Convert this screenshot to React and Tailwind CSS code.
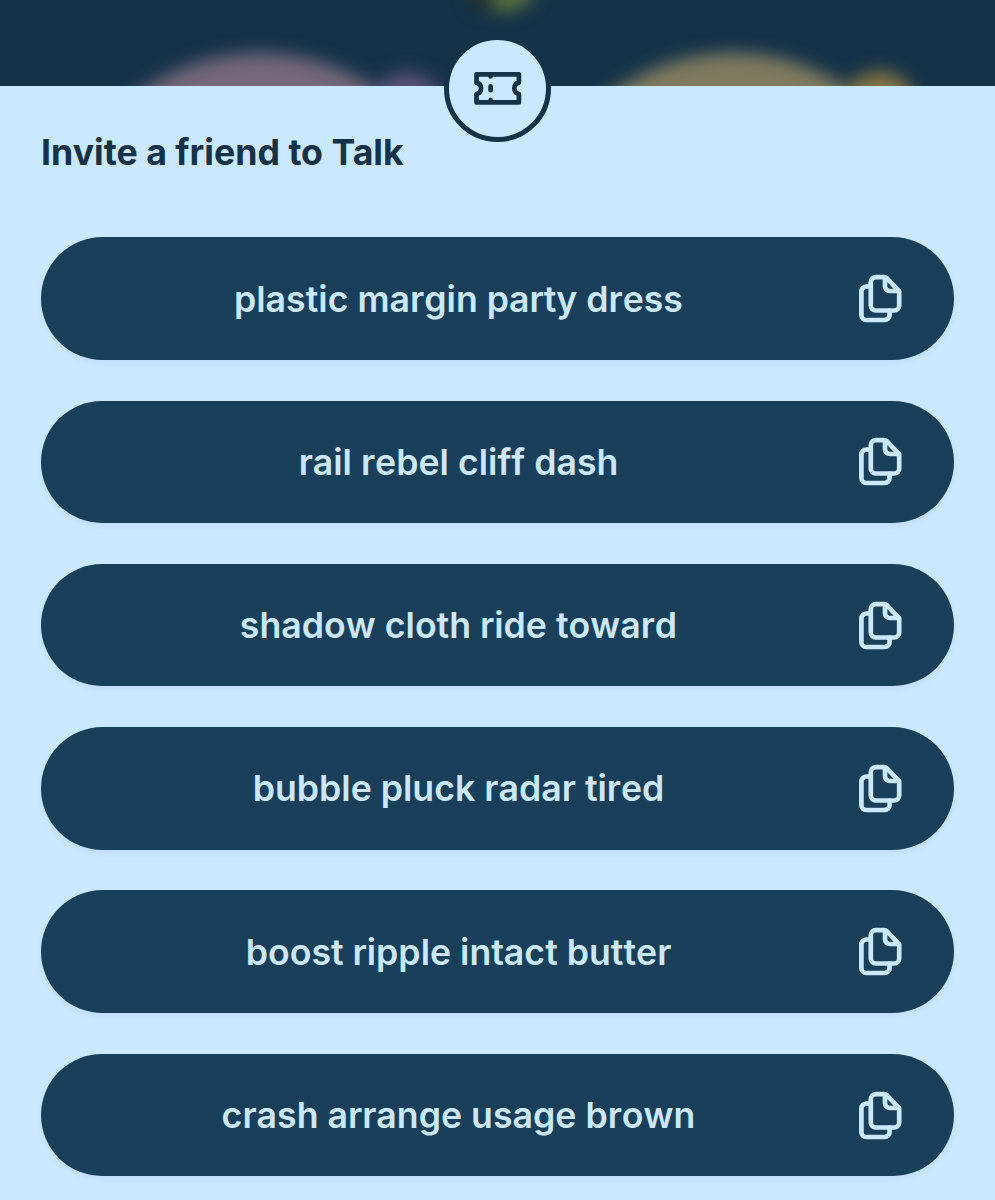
const INVITES = [
  'plastic margin party dress',
  'rail rebel cliff dash',
  'shadow cloth ride toward',
  'bubble pluck radar tired',
  'boost ripple intact butter',
  'crash arrange usage brown',
];

function TicketIcon() {
  return (
    <svg
      className="h-[34px] w-[50px]"
      viewBox="0 0 50 34"
      fill="none"
      stroke="currentColor"
      strokeWidth="4.7"
      strokeLinecap="round"
      strokeLinejoin="round"
    >
      <path d="M3.5 2.3H45.9V10.6A5.9 5.9 0 0 0 45.9 22.1V30.4H3.5V22.1A5.9 5.9 0 0 0 3.5 10.6Z" />
      <path d="M17.6 3.2V4.5M17.6 14.4V18.2M17.6 28.2V29.5" />
    </svg>
  );
}

function CopyIcon() {
  return (
    <svg
      className="h-[51px] w-[51px] shrink-0"
      viewBox="0 0 51 51"
      fill="none"
      stroke="currentColor"
      strokeWidth="4.7"
      strokeLinecap="round"
      strokeLinejoin="round"
    >
      <path d="M29 4.1H20.8A5 5 0 0 0 15.8 9.1V32.5A5 5 0 0 0 20.8 37.5H39.2A5 5 0 0 0 44.2 32.5V18.3L31.8 5.2Q30.7 4.1 29 4.1Z" />
      <path d="M30 4.5V13.2A4.8 4.8 0 0 0 34.8 18H43.7" />
      <path d="M15.8 13.5H11.4A5 5 0 0 0 6.4 18.5V42A5 5 0 0 0 11.4 47H29.6A5 5 0 0 0 34.6 42V37.5" />
    </svg>
  );
}

function Backdrop() {
  return (
    <svg className="block h-[86px] w-full bg-[#153248]" viewBox="0 0 995 86">
      <defs>
        <filter
          id="soft"
          filterUnits="userSpaceOnUse"
          x="-100"
          y="-100"
          width="1200"
          height="620"
          colorInterpolationFilters="sRGB"
        >
          <feGaussianBlur stdDeviation="8.5" />
        </filter>
      </defs>
      <g filter="url(#soft)">
        <circle cx="260" cy="259" r="206" fill="#74687a" />
        <circle cx="407" cy="110" r="38" fill="#5a5177" />
        <circle cx="733" cy="259" r="206" fill="#7f7b5f" />
        <circle cx="879" cy="109" r="38" fill="#847444" />
        <ellipse cx="504" cy="-14" rx="32" ry="26" fill="#58703f" />
        <ellipse cx="482" cy="-2" rx="12" ry="12" fill="#22302c" />
      </g>
    </svg>
  );
}

export default function App() {
  return (
    <div className="h-[1200px] w-[995px] overflow-hidden bg-[#cae8ff] font-['Inter',sans-serif] text-[#153248]">
      <Backdrop />
      <main className="relative px-[41px]">
        <div className="absolute inset-x-0 top-0 mx-auto flex size-[107px] -translate-y-[51px] items-center justify-center rounded-full border-[5px] border-[#153248] bg-[#cae8ff]">
          <TicketIcon />
        </div>
        <h1 className="pt-[42px] text-[35.7px] leading-[48px] font-bold">
          Invite a friend to Talk
        </h1>
        <ul className="mt-[61.3px] flex flex-col gap-[40.8px]">
          {INVITES.map((phrase) => (
            <li key={phrase}>
              <button className="flex h-[122.5px] w-full items-center rounded-full bg-[#193f5b] pr-[48px] pl-[21px] text-[#cae8ff] shadow-[0_3px_5px_rgba(120,130,220,0.1)]">
                <span className="flex-1 text-center text-[35.7px] leading-[48px] font-semibold [font-kerning:none]">
                  {phrase}
                </span>
                <CopyIcon />
              </button>
            </li>
          ))}
        </ul>
      </main>
    </div>
  );
}
